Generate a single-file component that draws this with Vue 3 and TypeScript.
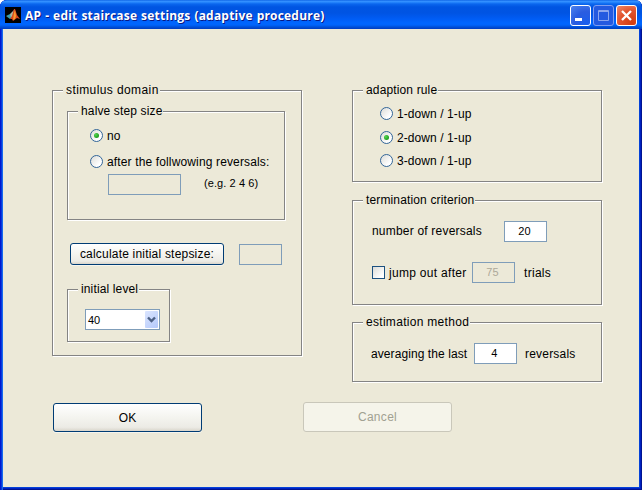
<script setup lang="ts">
import { ref } from 'vue'

const halveMode = ref<'no' | 'after'>('no')
const rules: string[] = ['1-down / 1-up', '2-down / 1-up', '3-down / 1-up']
const rule = ref(1)
const reversals = ref('20')
const trials = ref('75')
const lastCount = ref('4')
const jumpOut = ref(false)
</script>

<template>
  <div class="window">
    <header class="titlebar">
      <svg class="logo" viewBox="0 0 16 16">
        <rect width="16" height="16" fill="#000" />
        <path d="M1 9 L5 7 L8 9 L5 12 Z" fill="#3c9fb0" />
        <path d="M5 7 L9 3 L8 9 L6 11 Z" fill="#a8b8a0" />
        <path d="M5 12 L7 9 L9 2 L10 2 L12 8 L15 12 L12 11 L8 14 L7 12 Z" fill="#d9481c" />
        <path d="M8 13 L9 6 L10 3 L11 9 L10 12 Z" fill="#f89a2c" />
      </svg>
      <span class="title">AP - edit staircase settings (adaptive procedure)</span>
      <div class="controls">
        <button class="ctl"><svg viewBox="0 0 21 21"><rect x="5" y="13" width="7" height="3" fill="#fff" /></svg></button>
        <button class="ctl dim"><svg viewBox="0 0 21 21"><path d="M5.5 5.5h10v10h-10zM5 6.5h11" fill="none" stroke="#8ba6ee" /></svg></button>
        <button class="ctl close"><svg viewBox="0 0 21 21"><path d="M6 6l9 9M15 6l-9 9" stroke="#fff" stroke-width="2.3" /></svg></button>
      </div>
    </header>

    <main class="client">
      <div class="columns">
        <section class="group stimulus">
          <h2 class="legend l-stim">stimulus domain</h2>
          <section class="group halve">
            <h3 class="legend l-halve">halve step size</h3>
            <div class="row r-no" @click="halveMode = 'no'">
              <i class="radio" :class="{ on: halveMode === 'no' }"></i><span class="t-no">no</span>
            </div>
            <div class="row r-after" @click="halveMode = 'after'">
              <i class="radio" :class="{ on: halveMode === 'after' }"></i><span class="t-after">after the follwowing reversals:</span>
            </div>
            <div class="row r-eg">
              <div class="field wide"></div><span class="t-eg">(e.g. 2 4 6)</span>
            </div>
          </section>
          <div class="row r-calc">
            <button class="btn calc"><span class="t-calc">calculate initial stepsize:</span></button>
            <div class="field"></div>
          </div>
          <section class="group level">
            <h3 class="legend l-level">initial level</h3>
            <div class="select">
              <span>40</span>
              <i class="arrow"><svg viewBox="0 0 13 17"><path d="M3 6.5l3.5 3.5L10 6.5" fill="none" stroke="#4d6185" stroke-width="2.4" /></svg></i>
            </div>
          </section>
        </section>

        <div class="right">
          <section class="group adaption">
            <h2 class="legend l-adapt">adaption rule</h2>
            <div v-for="(r, i) in rules" :key="r" class="row r-rule" @click="rule = i">
              <i class="radio" :class="{ on: rule === i }"></i><span class="t-rule">{{ r }}</span>
            </div>
          </section>
          <section class="group termination">
            <h2 class="legend l-term">termination criterion</h2>
            <div class="row r-num">
              <span class="t-num">number of reversals</span>
              <div class="field white">{{ reversals }}</div>
            </div>
            <div class="row r-jump">
              <i class="check" @click="jumpOut = !jumpOut"></i>
              <span class="t-jump">jump out after</span>
              <div class="field off">{{ trials }}</div>
              <span class="t-trials">trials</span>
            </div>
          </section>
          <section class="group estimation">
            <h2 class="legend l-est">estimation method</h2>
            <div class="row r-avg">
              <span class="t-avg">averaging the last</span>
              <div class="field white">{{ lastCount }}</div>
              <span class="t-rev">reversals</span>
            </div>
          </section>
        </div>
      </div>

      <footer class="actions">
        <button class="btn ok">OK</button>
        <button class="btn cancel" disabled><span class="t-cancel">Cancel</span></button>
      </footer>
    </main>
  </div>
</template>

<style>
body { margin: 0; background: #fff; overflow: hidden; }
</style>

<style scoped>
* { box-sizing: border-box; }
.window {
  width: 642px; height: 490px; display: flex; flex-direction: column;
  padding: 0 3px 3px; border-radius: 7px 7px 0 0; overflow: hidden;
  background: #0831d9;
  box-shadow: inset 1px 0 #0019cf, inset 2px 0 #0838dc, inset 3px 0 #166aee, inset -1px -1px #001390, inset -2px -2px #0021c0, inset -3px -3px #0441d8;
  font: 12px/14px "Liberation Sans", Arial, sans-serif; color: #000;
}
.titlebar {
  height: 29px; flex: none; margin: 0 -3px; padding: 0 5px; display: flex; align-items: center;
  background: linear-gradient(#0058e0 0, #3a93ff 1px, #2a8bff 2px, #0a66ee 4px, #0055e2 7px, #0054e3 13px, #005bf2 18px, #0066ff 23px, #0064fb 25px, #0050d8 27px, #003dc0 29px);
}
.logo { width: 16px; height: 16px; margin-top: 1px; }
.title {
  margin-left: 4px; font: bold 12px/16px "Open Sans", sans-serif; color: #fff; white-space: nowrap;
  margin-top: 3px; text-shadow: 1px 1px #0a1883; letter-spacing: .2px; word-spacing: .6px;
}
.controls { margin-left: auto; display: flex; gap: 2px; margin-top: 2px; }
.ctl {
  width: 21px; height: 21px; padding: 0; border: 1px solid #fff; border-radius: 3px; overflow: hidden;
  background: radial-gradient(circle at 80% 90%, #1a5fee, #2a5ce0 50%, #4c82ee);
}
.ctl svg { display: block; width: 21px; height: 21px; margin: -1px; }
.dim { border-color: #7f9df0; background: #245ae0; }
.close { background: radial-gradient(circle at 80% 90%, #d43c10, #e2542e 55%, #ef8a6c); }

.client { flex: 1; background: #ece9d8; padding: 61px 36px 0 49px; }
.columns { display: flex; gap: 50px; }
.right { display: flex; flex-direction: column; }
.group {
  border: 1px solid #848484; width: 250px; display: flex; flex-direction: column; align-items: flex-start;
  box-shadow: 1px 1px #fff, inset 1px 1px #fff;
}
.legend {
  margin: -8px 0 0 10px; padding: 0 1px 0 3px; height: 14px; font: inherit; background: #ece9d8; white-space: nowrap;
}
.row { display: flex; align-items: center; white-space: nowrap; }
.stimulus { height: 266px; padding-left: 14px; }
.halve { width: 218px; height: 109px; margin-top: 14px; padding-left: 22px; }
.level { width: 103px; height: 53px; margin-top: 24px; padding-left: 17px; }
.level .legend { margin-left: -7px; }
.halve .legend { margin-left: -12px; }
.stimulus > .legend { margin-left: -4px; }
.r-no { height: 13px; margin-top: 11px; }
.r-after { height: 13px; margin-top: 13px; }
.row > .radio + span { margin-left: 4px; }
.r-eg { height: 21px; margin: 6px 0 0 18px; }
.t-eg { font-size: 11px; margin: -3px 0 0 23px; letter-spacing: .08px; }
.r-calc { height: 22px; margin: 23px 0 0 3px; gap: 15px; }

.l-stim { letter-spacing: .4px; }
.l-halve, .t-after, .l-adapt, .l-term, .l-level { letter-spacing: .14px; }
.t-calc, .t-num, .t-rev { letter-spacing: .2px; }
.t-jump, .t-trials, .l-est { letter-spacing: .3px; }
.t-rule, .t-avg { letter-spacing: .08px; }

.radio {
  width: 13px; height: 13px; flex: none; border-radius: 50%; border: 1px solid #336699;
  background: linear-gradient(135deg, #dcdcd7, #fff 75%); display: flex; align-items: center; justify-content: center;
}
.radio.on::after { content: ""; width: 5px; height: 5px; border-radius: 50%; background: radial-gradient(circle at 35% 35%, #55d551, #21a121 65%); }
.check { width: 13px; height: 13px; border: 1px solid #1c5180; background: linear-gradient(135deg, #dcdcd7, #fff 80%); }
.field {
  width: 43px; height: 21px; border: 1px solid #7f9db9; font-size: 11px; line-height: 19px; text-align: center; letter-spacing: .2px; padding-right: 2px;
}
.wide { width: 73px; }
.white { background: #fff; }
.off { color: #aca899; }
.select {
  width: 75px; height: 21px; margin-top: 13px; border: 1px solid #7f9db9; background: #fff; display: flex;
  align-items: center; justify-content: space-between; padding: 0 1px 0 2px; font-size: 11px;
}
.arrow { width: 13px; height: 17px; border-radius: 1px; background: linear-gradient(135deg, #dbe5fe, #b4c9fb); }
.arrow svg { display: block; width: 13px; height: 17px; }
.btn {
  font: inherit; color: #000; padding: 0; border: 1px solid #003c74; border-radius: 3px; white-space: nowrap;
  background: linear-gradient(#fff, #f4f4ef 50%, #ecebe5 86%, #d9d5cb);
}
.calc { width: 154px; height: 22px; box-shadow: 0 1px #f6f5ee; }

.adaption { height: 92px; padding-left: 27px; }
.adaption .legend { margin-left: -17px; }
.r-rule { height: 13px; margin-top: 10px; }
.r-rule + .r-rule { margin-top: 11px; }
.r-rule + .r-rule + .r-rule { margin-top: 10px; }
.termination { height: 105px; margin-top: 18px; padding-left: 19px; }
.termination .legend { margin-left: -9px; }
.r-num { margin-top: 14px; }
.t-num { width: 132px; margin-top: -2px; }
.r-jump { margin-top: 20px; }
.t-jump { width: 83px; margin-left: 4px; margin-top: 1px; }
.t-trials { margin-left: 9px; }
.estimation { height: 60px; margin-top: 17px; padding-left: 18px; }
.estimation .legend { margin-left: -8px; }
.r-avg { margin-top: 14px; }
.t-avg { width: 103px; }
.t-rev { margin-left: 8px; }

.actions { display: flex; gap: 101px; margin: 46px 0 0 1px; align-items: flex-start; margin-top: 20px; }
.stimulus { margin-bottom: 0; }
.columns { height: 292px; align-items: flex-start; }
.ok { width: 149px; height: 29px; margin-top: 1px; box-shadow: 0 1px #f6f5ee; }
.cancel { width: 149px; height: 30px; border-color: #c9c7ba; background: #f5f4ea; color: #a1a192; }
.t-cancel { letter-spacing: .3px; }
</style>
